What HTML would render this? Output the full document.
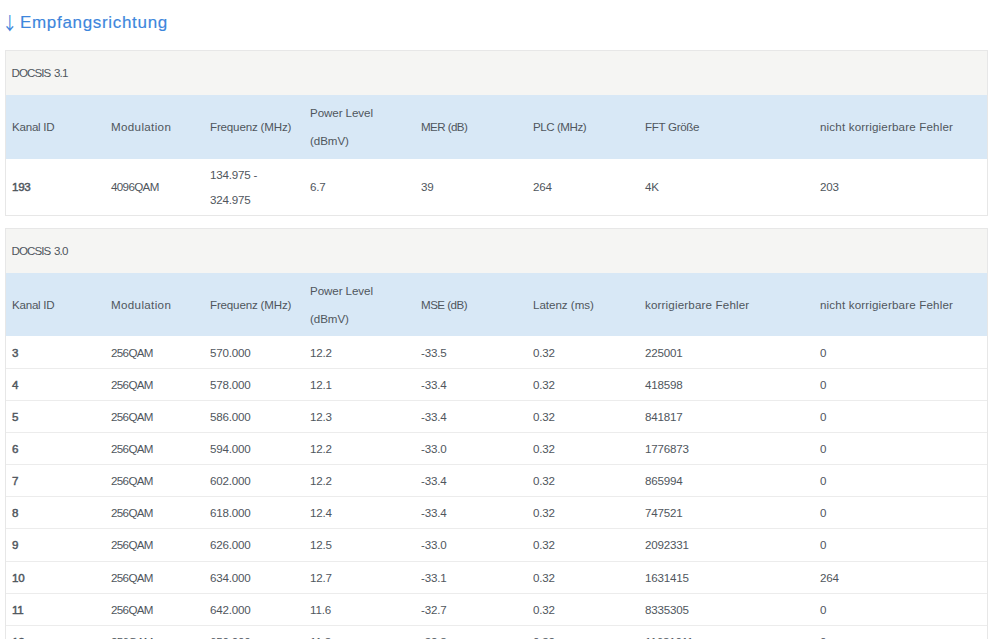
<!DOCTYPE html><html lang='de'><head><meta charset='utf-8'><title>Kabel-Informationen</title><style>
html,body{margin:0;padding:0;background:#fff;}
body{width:999px;height:639px;overflow:hidden;font-family:"Liberation Sans",sans-serif;font-size:11.6px;color:#4f565d;position:relative;}
h3{position:absolute;left:20px;top:10px;margin:0;font-weight:normal;font-size:17px;line-height:26px;color:#3d86dc;-webkit-text-stroke:0.15px #3d86dc;white-space:nowrap;letter-spacing:0.68px}
h3 .arr{position:absolute;left:-17.8px;top:-1px;font-family:"Noto Sans CJK JP","DejaVu Sans",sans-serif;font-size:17.8px;line-height:26px;letter-spacing:0;-webkit-text-stroke:0;display:block;transform:scaleX(0.87);transform-origin:0 0}
table{position:absolute;left:5px;width:983px;border-collapse:separate;border-spacing:0;table-layout:fixed;border:1px solid #e7e7e7;box-sizing:border-box;}
#t1{top:50px}
#t2{top:228px}
caption{display:none}
td,th{padding:3px 0 3px 6px;text-align:left;font-weight:normal;vertical-align:middle;white-space:nowrap;overflow:hidden}
tr.cap td{background:#f5f5f3;height:38px;line-height:25px;padding-top:2px;padding-bottom:4px;padding-left:5.5px}
tr.hd th{background:#d8e8f6;line-height:28px;height:57px;}
#t1 tr.hd th{height:58px}
tr.d td{line-height:25px;height:25px;border-top:1px solid #ececec;}
tr.d.first td{border-top:0;height:26px}
#t1 tr.d.first td{height:50px;padding-top:2px;padding-bottom:4px}
#t1 tr.d.first td.two{padding-top:3px;padding-bottom:3px}
td.id{font-weight:normal;-webkit-text-stroke:0.45px #4f565d;letter-spacing:-0.3px}
tr.d.tall td{padding-bottom:4px}
td:last-child,th:last-child{padding-left:7px}
.n{letter-spacing:-0.2px}
.q{letter-spacing:-0.65px}
.u{letter-spacing:-0.95px;word-spacing:1.6px}
</style></head><body><h3><span class='arr'>↓</span>Empfangsrichtung</h3><table id='t1'><colgroup><col style='width:99px'><col style='width:99px'><col style='width:100px'><col style='width:111px'><col style='width:112px'><col style='width:112px'><col style='width:174px'><col></colgroup><tr class='cap'><td colspan='8' class='u'>DOCSIS 3.1</td></tr><tr class='hd'><th style='letter-spacing:-0.25px'>Kanal ID</th><th style='letter-spacing:0.35px'>Modulation</th><th style='letter-spacing:-0.18px'>Frequenz (MHz)</th><th style='letter-spacing:-0.08px'>Power Level<br>(dBmV)</th><th style='letter-spacing:-0.58px'>MER (dB)</th><th style='letter-spacing:-0.47px'>PLC (MHz)</th><th style='letter-spacing:-0.33px'>FFT Größe</th><th style='letter-spacing:0.16px'>nicht korrigierbare Fehler</th></tr><tr class='d first'><td class='id n'>193</td><td class='q'>4096QAM</td><td class='n two'>134.975 -<br>324.975</td><td class='n'>6.7</td><td class='n'>39</td><td class='n'>264</td><td class='n'>4K</td><td class='n'>203</td></tr></table><table id='t2'><colgroup><col style='width:99px'><col style='width:99px'><col style='width:100px'><col style='width:111px'><col style='width:112px'><col style='width:112px'><col style='width:174px'><col></colgroup><tr class='cap'><td colspan='8' class='u'>DOCSIS 3.0</td></tr><tr class='hd'><th style='letter-spacing:-0.25px'>Kanal ID</th><th style='letter-spacing:0.35px'>Modulation</th><th style='letter-spacing:-0.18px'>Frequenz (MHz)</th><th style='letter-spacing:-0.08px'>Power Level<br>(dBmV)</th><th style='letter-spacing:-0.52px'>MSE (dB)</th><th style='letter-spacing:-0.03px'>Latenz (ms)</th><th style='letter-spacing:0.16px'>korrigierbare Fehler</th><th style='letter-spacing:0.16px'>nicht korrigierbare Fehler</th></tr><tr class='d first'><td class='id n'>3</td><td class='q'>256QAM</td><td class='n'>570.000</td><td class='n'>12.2</td><td class='n'>-33.5</td><td class='n'>0.32</td><td class='n'>225001</td><td class='n'>0</td></tr><tr class='d'><td class='id n'>4</td><td class='q'>256QAM</td><td class='n'>578.000</td><td class='n'>12.1</td><td class='n'>-33.4</td><td class='n'>0.32</td><td class='n'>418598</td><td class='n'>0</td></tr><tr class='d'><td class='id n'>5</td><td class='q'>256QAM</td><td class='n'>586.000</td><td class='n'>12.3</td><td class='n'>-33.4</td><td class='n'>0.32</td><td class='n'>841817</td><td class='n'>0</td></tr><tr class='d'><td class='id n'>6</td><td class='q'>256QAM</td><td class='n'>594.000</td><td class='n'>12.2</td><td class='n'>-33.0</td><td class='n'>0.32</td><td class='n'>1776873</td><td class='n'>0</td></tr><tr class='d'><td class='id n'>7</td><td class='q'>256QAM</td><td class='n'>602.000</td><td class='n'>12.2</td><td class='n'>-33.4</td><td class='n'>0.32</td><td class='n'>865994</td><td class='n'>0</td></tr><tr class='d'><td class='id n'>8</td><td class='q'>256QAM</td><td class='n'>618.000</td><td class='n'>12.4</td><td class='n'>-33.4</td><td class='n'>0.32</td><td class='n'>747521</td><td class='n'>0</td></tr><tr class='d tall'><td class='id n'>9</td><td class='q'>256QAM</td><td class='n'>626.000</td><td class='n'>12.5</td><td class='n'>-33.0</td><td class='n'>0.32</td><td class='n'>2092331</td><td class='n'>0</td></tr><tr class='d'><td class='id n'>10</td><td class='q'>256QAM</td><td class='n'>634.000</td><td class='n'>12.7</td><td class='n'>-33.1</td><td class='n'>0.32</td><td class='n'>1631415</td><td class='n'>264</td></tr><tr class='d'><td class='id n'>11</td><td class='q'>256QAM</td><td class='n'>642.000</td><td class='n'>11.6</td><td class='n'>-32.7</td><td class='n'>0.32</td><td class='n'>8335305</td><td class='n'>0</td></tr><tr class='d'><td class='id n'>12</td><td class='q'>256QAM</td><td class='n'>650.000</td><td class='n'>11.8</td><td class='n'>-32.8</td><td class='n'>0.32</td><td class='n'>11631011</td><td class='n'>0</td></tr></table></body></html>
